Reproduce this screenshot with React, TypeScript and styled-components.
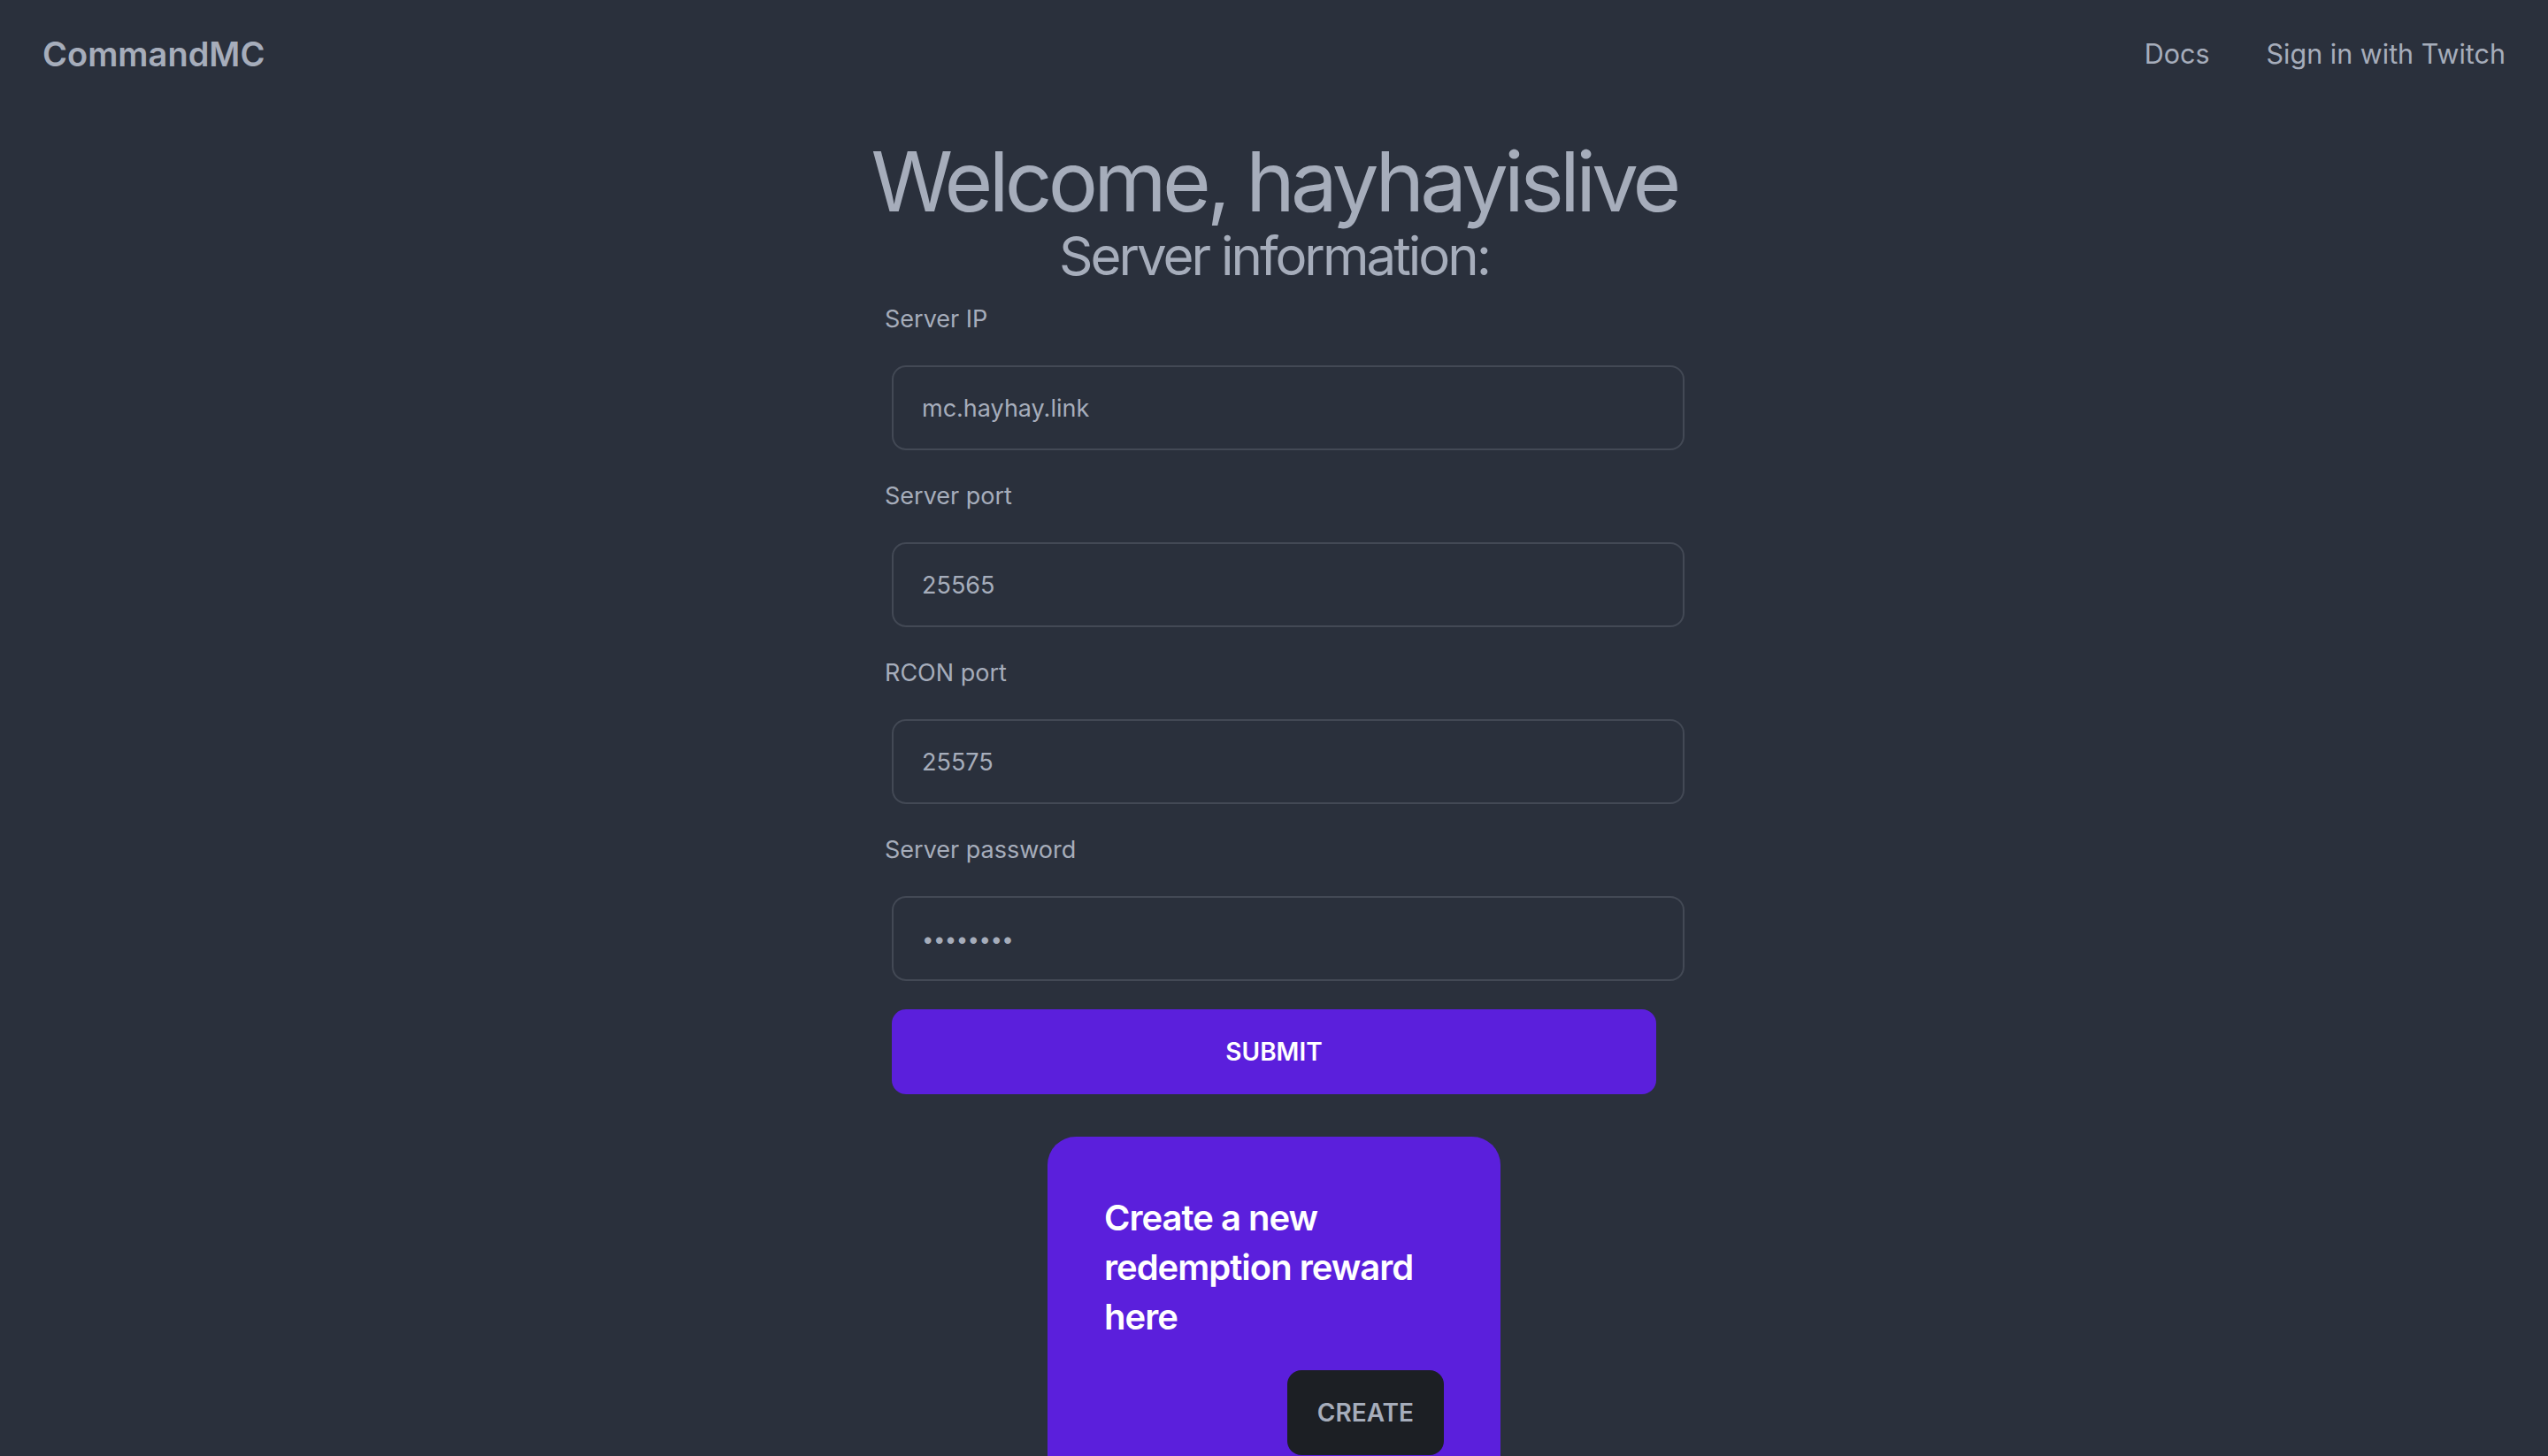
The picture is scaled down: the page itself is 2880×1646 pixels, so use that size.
import styled, { createGlobalStyle } from "styled-components";


const GlobalStyle = createGlobalStyle`
	html, body {
		margin: 0;
		padding: 0;
		background: #2a303c;
		color: #a6adbb;
		font-family: Inter, "Noto Sans", sans-serif;
	}

	* {
		box-sizing: border-box;
	}
`;


const PageSC = styled.div`
	min-height: 100vh;
	background: #2a303c;
`;


const NavbarSC = styled.nav`
	display: flex;
	align-items: center;
	justify-content: space-between;
	height: 122px;
	padding: 0 16px;

	.brand {
		padding: 0 32px;
		font-size: 38px;
		font-weight: 600;
		color: #a6adbb;
		text-decoration: none;
	}

	.links {
		display: flex;
		align-items: center;
	}

	.link {
		padding: 0 32px;
		font-size: 30.5px;
		line-height: 48px;
		color: #a6adbb;
		text-decoration: none;
	}
`;


const MainSC = styled.main`
	display: flex;
	flex-direction: column;
	align-items: center;
	padding-top: 35px;
`;


const TitleSC = styled.h1`
	margin: 0;
	font-size: 94px;
	line-height: 96px;
	font-weight: 400;
	letter-spacing: -0.05em;
	color: #a6adbb;
`;


const SubtitleSC = styled.h2`
	margin: 0;
	font-size: 60px;
	line-height: 72px;
	font-weight: 400;
	letter-spacing: -0.05em;
	color: #a6adbb;
`;


const FormSC = styled.form`
	display: flex;
	flex-direction: column;
	align-items: flex-start;
	width: 896px;
`;


const LabelSC = styled.label`
	display: block;
	padding: 16px 8px;
	font-size: 27px;
	line-height: 40px;
	color: #a6adbb;
`;


const InputSC = styled.input<{ $secret?: boolean }>`
	flex-shrink: 0;
	width: 896px;
	height: 96px;
	margin: 16px;
	padding: 0 32px;
	border: 2px solid #434955;
	border-radius: 16px;
	background: #2a303c;
	color: #a6adbb;
	font-family: inherit;
	font-size: ${p => p.$secret ? "24px" : "27px"};
	letter-spacing: ${p => p.$secret ? "-0.6px" : "normal"};
	outline: none;
`;


const SubmitSC = styled.button`
	align-self: stretch;
	height: 96px;
	margin: 16px;
	border: none;
	border-radius: 16px;
	background: #5b1fdc;
	color: #ffffff;
	font-family: inherit;
	font-size: 28px;
	font-weight: 600;
	text-transform: uppercase;
	cursor: pointer;
`;


const CardSC = styled.div`
	width: 512px;
	margin-top: 32px;
	padding: 64px;
	border-radius: 32px;
	background: #5b1fdc;
	color: #ffffff;

	.card-title {
		margin: 0;
		font-size: 40px;
		line-height: 56px;
		font-weight: 600;
		letter-spacing: -0.025em;
	}

	.card-actions {
		display: flex;
		justify-content: flex-end;
		margin-top: 32px;
	}
`;


const CreateButtonSC = styled.button`
	height: 96px;
	padding: 0 34px;
	border: none;
	border-radius: 16px;
	background: #1c1f24;
	color: #a6adbb;
	font-family: inherit;
	font-size: 28px;
	font-weight: 600;
	text-transform: uppercase;
	cursor: pointer;
`;


interface IServerField
{
	id: string;
	label: string;
	value: string;
	type?: string;
}


const fields: IServerField[] = [
	{ id: "ip", label: "Server IP", value: "mc.hayhay.link" },
	{ id: "port", label: "Server port", value: "25565" },
	{ id: "rcon", label: "RCON port", value: "25575" },
	{ id: "password", label: "Server password", value: "hunter42", type: "password" },
];


export default function App()
{
	return (
		<PageSC>
			<GlobalStyle />

			<NavbarSC>
				<a className="brand" href="#">CommandMC</a>
				<div className="links">
					<a className="link" href="#">Docs</a>
					<a className="link" href="#">Sign in with Twitch</a>
				</div>
			</NavbarSC>

			<MainSC>
				<TitleSC>Welcome, hayhayislive</TitleSC>
				<SubtitleSC>Server information:</SubtitleSC>

				<FormSC onSubmit={e => e.preventDefault()}>
					{fields.map(field => (
						<div key={field.id}>
							<LabelSC htmlFor={field.id}>{field.label}</LabelSC>
							<InputSC
								id={field.id}
								type={field.type ?? "text"}
								$secret={field.type === "password"}
								defaultValue={field.value}
							/>
						</div>
					))}
					<SubmitSC type="submit">Submit</SubmitSC>
				</FormSC>

				<CardSC>
					<h2 className="card-title">Create a new redemption reward here</h2>
					<div className="card-actions">
						<CreateButtonSC>Create</CreateButtonSC>
					</div>
				</CardSC>
			</MainSC>
		</PageSC>
	);
}
